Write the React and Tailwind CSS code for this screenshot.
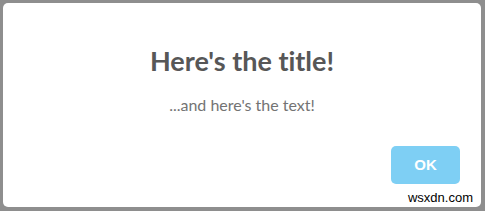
import React from "react";

const App = () => {
  return (
    <div className="w-[485px] h-[211px] bg-[#8e8e8e] p-[3px] overflow-hidden">
      <div className="relative w-[478px] h-[204px] bg-white rounded-[5px] flex flex-col items-center font-['Lato',sans-serif] [font-variant-ligatures:none]">
        <h2 className="mt-[41px] text-[27px] leading-[34px] font-bold text-[#575757]">
          Here's the title!
        </h2>
        <p className="mt-[17px] text-[16px] leading-[20px] text-[#737373]">
          ...and here's the text!
        </p>
        <div className="w-full flex justify-end pr-[21px] mt-[31px]">
          <button className="w-[69px] h-[38px] rounded-[5px] bg-[#7ecff4] text-white text-[15px] font-bold font-['Liberation_Sans',sans-serif]">
            OK
          </button>
        </div>
        {/* watermark sits over the dialog corner */}
        <span className="absolute right-[8px] bottom-[1px] text-[13px] leading-[16px] text-black font-['Liberation_Sans',sans-serif]">
          wsxdn.com
        </span>
      </div>
    </div>
  );
};

export default App;
